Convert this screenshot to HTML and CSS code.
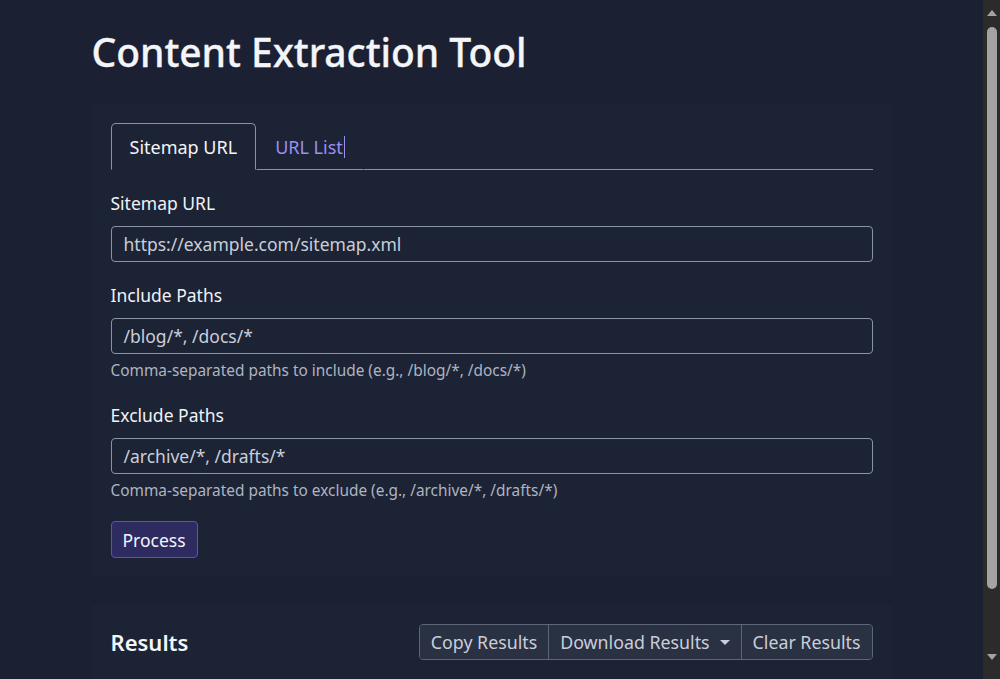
FILE: index.html
```html
<!DOCTYPE html>
<html lang="en">
<head>
<meta charset="utf-8">
<title>Content Extraction Tool</title>
<link rel="stylesheet" href="styles.css">
</head>
<body>
<div class="container">
  <h1 class="title">Content Extraction Tool</h1>

  <section class="card form-card">
    <div class="tabs">
      <div class="tab active">Sitemap URL</div>
      <div class="tab link">URL List<span class="caret"></span></div>
      <div class="tab-fill"></div>
    </div>

    <div class="field">
      <label class="label">Sitemap URL</label>
      <div class="input">https://example.com/sitemap.xml</div>
    </div>

    <div class="field field-include">
      <label class="label">Include Paths</label>
      <div class="input">/blog/*, /docs/*</div>
      <div class="help">Comma-separated paths to include (e.g., /blog/*, /docs/*)</div>
    </div>

    <div class="field field-exclude">
      <label class="label">Exclude Paths</label>
      <div class="input">/archive/*, /drafts/*</div>
      <div class="help">Comma-separated paths to exclude (e.g., /archive/*, /drafts/*)</div>
    </div>

    <button class="btn-primary">Process</button>
  </section>

  <section class="card results-card">
    <div class="results-head">
      <h2 class="results-title">Results</h2>
      <div class="btn-group">
        <button class="btn">Copy Results</button>
        <button class="btn">Download Results <span class="tri"></span></button>
        <button class="btn">Clear Results</button>
      </div>
    </div>
    <div class="results-body"></div>
  </section>
</div>

<div class="scrollbar" aria-hidden="true">
  <span class="sb-arrow up"></span>
  <span class="sb-thumb"></span>
  <span class="sb-arrow down"></span>
</div>
</body>
</html>
```

FILE: styles.css
```css
html, body {
  margin: 0;
  padding: 0;
  background: #1b2132;
  color: #e6e9ef;
  font-family: "Noto Sans", "Open Sans", Arial, sans-serif;
}

body {
  padding-right: 17px;
}

.container {
  width: 800px;
  margin: 0 auto;
  padding-top: 27px;
}

.title {
  margin: 0 0 28px 0;
  font-size: 39px;
  line-height: 50px;
  font-weight: 500;
  color: #f3f5f9;
  letter-spacing: -0.05px;
  -webkit-text-stroke: 0.3px #f3f5f9;
}

.card {
  background: #1c2334;
  padding: 18px 19px 19px;
}

.tabs {
  display: flex;
  align-items: stretch;
  height: 47px;
  margin-bottom: 20px;
}

.tab {
  display: flex;
  align-items: center;
  padding: 0 18px;
  font-size: 18px;
  border: 1px solid transparent;
  border-bottom: 1px solid #8a92a6;
  border-radius: 5px 5px 0 0;
}

.tab.active {
  border-color: #8a92a6;
  border-bottom-color: transparent;
  color: #f3f5f9;
}

.tab.link {
  color: #9b8ff2;
}

.caret {
  display: inline-block;
  width: 1px;
  height: 22px;
  background: #9b8ff2;
  margin-left: 1px;
}

.tab-fill {
  flex: 1;
  border-bottom: 1px solid #8a92a6;
}

.field {
  display: flex;
  flex-direction: column;
  margin-bottom: 20px;
}

.field-include {
  margin-bottom: 19px;
}

.field-exclude {
  margin-bottom: 18px;
}

.label {
  font-size: 17.5px;
  line-height: 26px;
  color: #f0f2f6;
  margin-bottom: 10px;
}

.input {
  height: 34px;
  border: 1px solid #8a92a6;
  border-radius: 4px;
  padding: 0 12px;
  display: flex;
  align-items: center;
  font-size: 17.5px;
  color: #c9ceda;
  background: #1c2334;
}

.help {
  margin-top: 5px;
  font-size: 15.4px;
  line-height: 24px;
  color: #aeb4c2;
}

.btn-primary {
  display: block;
  font-family: inherit;
  font-size: 17.5px;
  color: #f3f5f9;
  background: #2e2b61;
  border: 1px solid #5a4fc6;
  border-radius: 4px;
  height: 37px;
  padding: 0 11px;
  margin: 0;
}

.results-card {
  margin-top: 28px;
  padding-top: 19px;
}

.results-head {
  display: flex;
  align-items: center;
  justify-content: space-between;
}

.results-title {
  margin: 0;
  font-size: 22px;
  font-weight: 600;
  color: #f3f5f9;
}

.btn-group {
  display: flex;
  border: 1px solid #5d6579;
  border-radius: 4px;
  overflow: hidden;
  background: #2a3142;
}

.btn {
  font-family: inherit;
  font-size: 17.8px;
  color: #c9ceda;
  background: #2a3142;
  border: none;
  border-left: 1px solid #5d6579;
  height: 34px;
  padding: 0 11px;
  display: flex;
  align-items: center;
}

.btn:first-child {
  border-left: none;
}

.tri {
  display: inline-block;
  width: 0;
  height: 0;
  border-left: 5px solid transparent;
  border-right: 5px solid transparent;
  border-top: 5px solid #c9ceda;
  margin-left: 10px;
}

.results-body {
  height: 100px;
}

/* emulated window scrollbar */
.scrollbar {
  position: fixed;
  top: 0;
  right: 0;
  width: 17px;
  height: 100%;
  background: #2b2b2c;
  display: flex;
  flex-direction: column;
  align-items: center;
}

.sb-thumb {
  width: 10px;
  height: 562px;
  margin-top: 11px;
  background: #a3a3a3;
  border-radius: 5px;
}

.sb-arrow {
  width: 0;
  height: 0;
  border-left: 5px solid transparent;
  border-right: 5px solid transparent;
}

.sb-arrow.up {
  margin-top: 10px;
  border-bottom: 6px solid #a3a3a3;
}

.sb-arrow.down {
  margin-top: auto;
  margin-bottom: 19px;
  border-top: 6px solid #a3a3a3;
}
```
